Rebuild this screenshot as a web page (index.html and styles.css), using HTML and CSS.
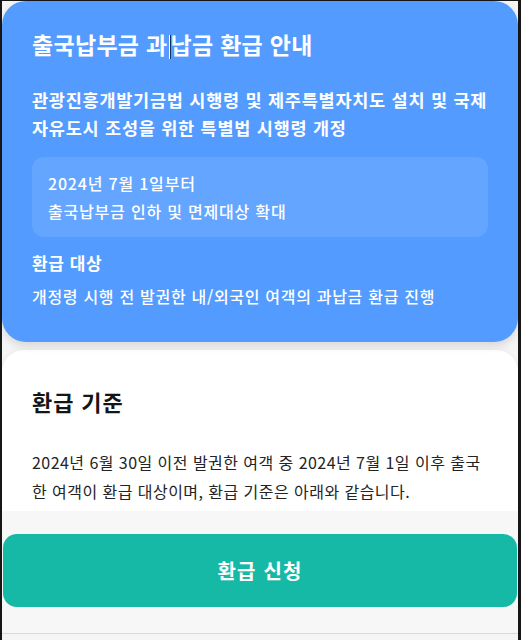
FILE: index.html
```html
<!DOCTYPE html>
<html lang="ko">
<head>
<meta charset="utf-8">
<link rel="stylesheet" href="styles.css">
</head>
<body>
<div class="frame">
  <section class="hero">
    <h1 class="hero-title">출국납부금 과<span class="caret"></span>납금 환급 안내</h1>
    <p class="hero-sub">관광진흥개발기금법 시행령 및 제주특별자치도 설치 및 국제<br>자유도시 조성을 위한 특별법 시행령 개정</p>
    <div class="hero-box">
      <p>2024년 7월 1일부터</p>
      <p>출국납부금 인하 및 면제대상 확대</p>
    </div>
    <h2 class="hero-h2">환급 대상</h2>
    <p class="hero-desc">개정령 시행 전 발권한 내/외국인 여객의 과납금 환급 진행</p>
  </section>
  <section class="card">
    <h2 class="card-title">환급 기준</h2>
    <p class="card-text">2024년 6월 30일 이전 발권한 여객 중 2024년 7월 1일 이후 출국<br>한 여객이 환급 대상이며, 환급 기준은 아래와 같습니다.</p>
  </section>
  <footer class="footer">
    <button class="apply">환급 신청</button>
  </footer>
</div>
</body>
</html>
```

FILE: styles.css
```css
* { box-sizing: border-box; margin: 0; padding: 0; }
html, body { width: 521px; height: 640px; overflow: hidden; background: #f2f2f2; }
body { font-family: "Noto Sans CJK KR", "Noto Sans", sans-serif; }

.frame {
  width: 521px;
  height: 640px;
  border-left: 2px solid #161616;
  border-right: 3px solid #161616;
  border-top: 1px solid #161616;
  background: #f5f5f5;
  display: flex;
  flex-direction: column;
  overflow: hidden;
}

.hero {
  background: #539bff;
  border-radius: 24px;
  padding: 28px 30px 34px 30px;
  color: #fff;
  box-shadow: 0 4px 8px rgba(0,0,0,0.12);
  position: relative;
  z-index: 1;
}

.hero-title {
  font-size: 23px;
  line-height: 30px;
  font-weight: 700;
  letter-spacing: 0.3px;
}
.caret {
  display: inline-block;
  width: 2px;
  height: 24px;
  background: linear-gradient(90deg, #ffffff 50%, #1b2f5c 50%);
  vertical-align: -5px;
  margin: 0 0 0 1px;
}

.hero-sub {
  margin-top: 27px;
  font-size: 17.5px;
  line-height: 28px;
  font-weight: 700;
  letter-spacing: 0.75px;
  white-space: nowrap;
}

.hero-box {
  margin-top: 15px;
  background: rgba(255,255,255,0.1);
  border-radius: 12px;
  padding: 12px 16px;
  font-size: 16px;
  line-height: 28px;
  font-weight: 500;
  letter-spacing: 0.8px;
}

.hero-h2 {
  margin-top: 13px;
  font-size: 17px;
  line-height: 26px;
  font-weight: 700;
  letter-spacing: 0.6px;
}

.hero-desc {
  margin-top: 8px;
  font-size: 16px;
  line-height: 24px;
  font-weight: 500;
  letter-spacing: 0.7px;
  white-space: nowrap;
}

.card {
  margin-top: 8px;
  background: #fff;
  border-radius: 22px 22px 0 0;
  padding: 36px 30px 5px 30px;
  box-shadow: 0 0 6px rgba(0,0,0,0.05);
  color: #222;
}

.card-title {
  font-size: 22px;
  line-height: 30px;
  font-weight: 700;
  color: #151515;
  letter-spacing: 0.9px;
}

.card-text {
  margin-top: 32px;
  font-size: 16px;
  line-height: 29px;
  font-weight: 400;
  color: #242424;
  letter-spacing: 0.45px;
  white-space: nowrap;
}

.footer {
  flex: 1;
  background: #f7f7f7;
  padding: 23px 0 0 1px;
  border-bottom: 1px solid #d9d9d9;
  margin-bottom: 6px;
}

.apply {
  display: block;
  width: 514px;
  height: 73px;
  border: none;
  border-radius: 14px;
  background: #16b8a6;
  color: #fff;
  font-family: "Noto Sans CJK KR", "Noto Sans", sans-serif;
  font-size: 20px;
  font-weight: 700;
  letter-spacing: 1.2px;
}
```
